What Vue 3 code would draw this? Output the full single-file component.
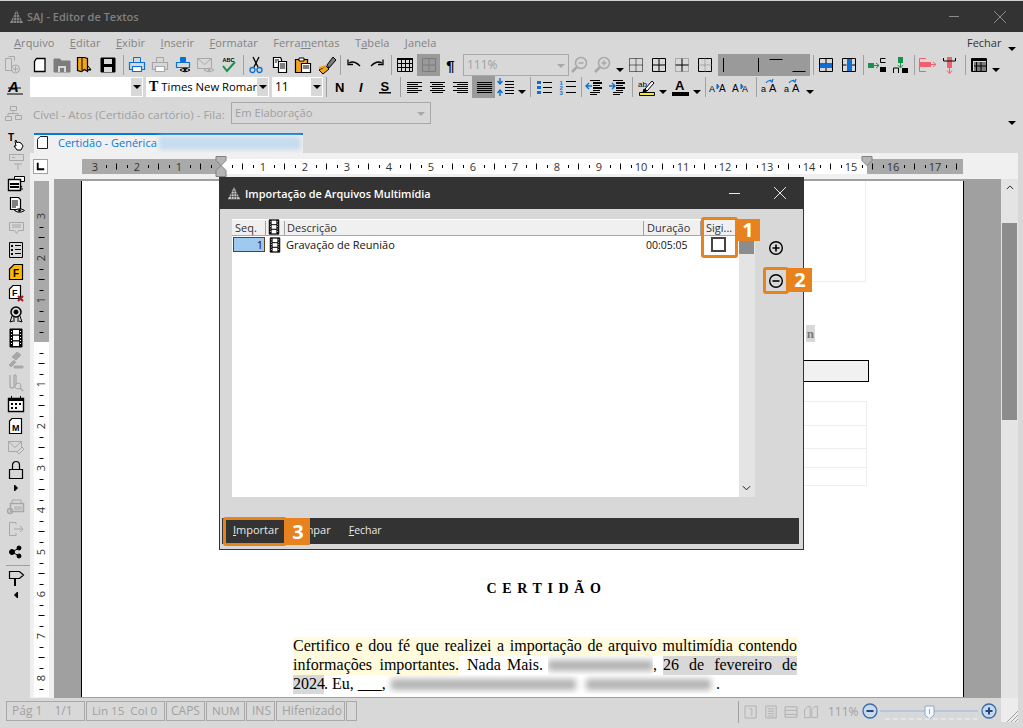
<script setup>
const K = '#000', G = '#a8a8a8', B = '#0a6fd6', O = '#f5a31a', R = '#f2606e', V = '#16924a', M = '#7c7c7c'
const p = (d, s = K, f = 'none', w = 1) => `<path d="${d}" stroke="${s}" fill="${f}" stroke-width="${w}"/>`
const c = (x, y, r, s = K, f = 'none', w = 1) => `<circle cx="${x}" cy="${y}" r="${r}" stroke="${s}" fill="${f}" stroke-width="${w}"/>`
const t = (x, y, s, size = 6, f = K, extra = '') => `<text x="${x}" y="${y}" font-size="${size}" fill="${f}" font-family="Liberation Sans, sans-serif" ${extra}>${s}</text>`
const eye = (x, y, s = K) => p(`M${x - 5} ${y}q5 -3.5 10 0q-5 3.5 -10 0z`, s, '#d8d8d8') + c(x, y, 1, s, s)
const printer = (s, f = 'none') => p('M6.5 2.5h7v5h-7z', s, f) + p('M2.5 7.5h15v7h-15z', s, f, 1.2) + p('M5.5 11.5h9v5h-9z', s, '#fff', 1.2)
const grid = (s, d = '') => `<g stroke-dasharray="${d}">` + p('M3.5 3.5h13v13h-13z', s) + p('M10 3.5v13M3.5 10h13', s) + '</g>'
const magnifier = plus => c(12, 8, 5.5, G, 'none', 1.5) + p('M8 12l-5 5', G, 'none', 2.5) + p('M9.5 8h5' + (plus ? 'M12 5.5v5' : ''), G, 'none', 1.5)
const lines = rows => rows.map(([x, y, w, h = 1, col = K]) => `<rect x="${x}" y="${y}" width="${w}" height="${h}" fill="${col}"/>`).join('')
const film = p('M4 1h12v18H4z', K, K) + lines([[7, 2, 6, 4.5, '#fff'], [7, 7.7, 6, 4.5, '#fff'], [7, 13.5, 6, 4.5, '#fff'], [5, 3, 1, 1, '#fff'], [5, 6, 1, 1, '#fff'], [5, 9, 1, 1, '#fff'], [5, 12, 1, 1, '#fff'], [5, 15, 1, 1, '#fff'], [14, 3, 1, 1, '#fff'], [14, 6, 1, 1, '#fff'], [14, 9, 1, 1, '#fff'], [14, 12, 1, 1, '#fff'], [14, 15, 1, 1, '#fff']])
const caseIcon = (s1, s2) => t(s1, 15, 'a', 9) + t(s2, 15, 'A', 11) + p('M6 6q3 -4 6 -1M10 3l2 2l1 -3', B, 'none', 1.2)

const icons = {
  newD: p('M3.5 3.5h6v12h-6z', G) + p('M6.5 1.5h6v4', G) + c(13.5, 14, 4, G) + p('M11 14h5M13.5 11.5v5', G),
  doc: p('M6.5 3.5h8.5v13H4.5V6.5z', K, '#fff', 1.3),
  openD: p('M2 4h6l1 2h9v11H2z', M, M) + lines([[6, 11, 8, 6, '#d8d8d8'], [8, 13, 4, 4, M]]),
  map: p('M2.5 2.5h7l3 1v13l-3 -2-3 2-4 -1z', K, O, 1.2) + p('M7 3v12', K) + p('M13 11l3 4h-3l3 -1', K),
  save: p('M3 3h14v14H3z', K, K) + lines([[6, 4, 8, 5, '#d8d8d8'], [6, 12, 8, 5, '#d8d8d8']]),
  printB: printer(B), printG: printer(G),
  printEye: p('M7.5 2.5h5v4h-5z', B, B) + p('M3.5 7.5h13v5h-13z', B, 'none', 1.2) + eye(12, 15),
  mailEye: p('M1.5 3.5h14v10h-14zM1.5 3.5l7 6l7 -6', G) + eye(13, 15, G),
  abc: t(3.5, 7, 'ABC', 5.5, K, 'font-weight="bold"') + p('M4 11l4 5l8 -9', V, 'none', 2),
  cut: p('M7 2l5 10M13 2L8 12', K, 'none', 1.3) + c(6.5, 15, 2.5, B, 'none', 1.3) + c(13.5, 15, 2.5, B, 'none', 1.3),
  copy: p('M3.5 2.5h7l1 2v8h-8z', K, '#fff', 1.2) + p('M8.5 6.5h8v11h-8z', K, '#fff', 1.2) + p('M10 9h5M10 11h5M10 13h5M5 5h4M5 7h2', K),
  paste: p('M2.5 4.5h12v13h-12z', K, O, 1.2) + p('M6 3h5v3H6z', K, '#fff') + p('M8.5 8.5h9v9h-9z', K, '#fff', 1.2) + p('M10 11h6M10 13h6', K),
  brush: p('M2 15l7 -4l3 3l-6 5z', K, O) + p('M10 10l6 -8l3 3l-7 8z', K, M) + p('M2 13l7 -2', O, 'none', 2),
  undo: p('M5 8q5 -3 11 3', K, 'none', 1.3) + p('M4 4.5v5h5', K, 'none', 1.3),
  redo: p('M15 8q-5 -3 -11 3', K, 'none', 1.3) + p('M16 4.5v5h-5', K, 'none', 1.3),
  table: p('M2.5 3.5h15v13h-15z', K) + lines([[2, 3, 16, 2]]) + p('M2.5 8.5h15M2.5 12.5h15M6.5 3.5v13M10.5 3.5v13M14.5 3.5v13', K),
  gridA: p('M3.5 3.5h13v13h-13zM10 3.5v13M3.5 10h13', M, 'none', 1),
  zm: magnifier(false), zp: magnifier(true),
  g1: grid(K, '1 1'), g2: grid(K),
  g3: `<g stroke-dasharray="1 1">${p('M3.5 3.5h13v13h-13z', M)}</g>` + p('M10 3.5v13M3.5 10h13', K),
  g4: p('M3.5 3.5h13v13h-13z', K) + `<g stroke-dasharray="1 1">${p('M10 3.5v13M3.5 10h13', M)}</g>`,
  bL: p('M3.5 3v14', K), bR: p('M15.5 3v14', K), bT: p('M3.5 4.5h13', K), bB: p('M3.5 16.5h13', K),
  rowB: lines([[4, 8, 12, 5, B]]) + p('M3.5 3.5h13v13h-13zM10 3.5v5M10 13v3', K),
  colB: lines([[8, 4, 5, 12, B]]) + p('M3.5 3.5h13v13h-13zM3.5 10h4M13 10h3', K),
  insR: lines([[1, 8, 6, 5, V]]) + p('M7 10.5h5M9 8l3 2.5l-3 2.5', V) + p('M13.5 3.5h5M13.5 3.5v4h5', K) + lines([[13, 12, 6, 5]]),
  insC: lines([[8, 2, 5, 6, V]]) + p('M10.5 8v4M8 10l2.5 3l2.5 -3', V) + p('M3.5 18v-5h5v5', K) + lines([[12, 13, 6, 5]]),
  delR: lines([[3, 7, 11, 5, R]]) + p('M9 3.5H2.5v13H9', R) + p('M14 9.5h5M16 7l3 2.5l-3 2.5', R),
  delC: lines([[7, 2, 5, 11, R]]) + p('M3.5 3v3h12V3', K) + p('M9.5 13v5M7 15.5l2.5 3l2.5 -3', R),
  shade: p('M2.5 3.5h15v13h-15z', K) + lines([[3, 4, 14, 2], [3, 6, 1, 10]]) + `<path d="M5 7h12v9H5z" fill="${M}"/>` + p('M7.5 7v9M12 7v9M5 11h12', K),
  styleA: t(3, 15, 'A', 15, K, 'font-style="italic" font-weight="bold"') + p('M2 17h16M3 11h13', K),
  N: t(5, 15, 'N', 13, K, 'font-weight="bold"'),
  I: t(7, 15, 'I', 13, K, 'font-weight="bold" font-style="italic"'),
  S: t(5.5, 14, 'S', 13, K, 'font-weight="bold"') + lines([[4, 15, 12, 1.5]]),
  al: lines([[3, 5, 15], [3, 7, 11], [3, 9, 15], [3, 11, 11], [3, 13, 15], [3, 15, 11]]),
  ac: lines([[3, 5, 15], [5, 7, 11], [3, 9, 15], [5, 11, 11], [3, 13, 15], [5, 15, 11]]),
  ar: lines([[3, 5, 15], [7, 7, 11], [3, 9, 15], [7, 11, 11], [3, 13, 15], [7, 15, 11]]),
  aj: lines([[3, 5, 15], [3, 7, 15], [3, 9, 15], [3, 11, 15], [3, 13, 15], [3, 15, 15]]),
  spacing: p('M4 1v6M1.5 4L4 7l2.5 -3M4 19v-6M1.5 16L4 13l2.5 3', B, 'none', 1.4) + lines([[9, 4, 9], [9, 7, 9], [9, 10, 9], [9, 13, 9], [9, 16, 9]]),
  bl: lines([[3, 4, 4, 3, B], [3, 9, 4, 3, B], [3, 14, 4, 3, B], [9, 5, 9], [9, 10, 9], [9, 15, 9]]),
  nl: t(2.5, 8, '1', 6, B, 'font-weight="bold"') + t(2.5, 13, '2', 6, B, 'font-weight="bold"') + t(2.5, 18, '3', 6, B, 'font-weight="bold"') + lines([[9, 4, 10], [9, 9, 10], [9, 15, 10]]),
  indL: p('M8 9H2M5 6L2 9l3 3', B, 'none', 1.4) + lines([[6, 3, 10], [9, 5, 9, 2], [9, 8, 7], [9, 10, 9, 2], [9, 13, 7], [6, 15, 10], [6, 17, 7]]),
  indR: p('M2 9h6M5 6l3 3l-3 3', B, 'none', 1.4) + lines([[6, 3, 10], [9, 5, 9, 2], [9, 8, 7], [9, 10, 9, 2], [9, 13, 7], [6, 15, 10], [6, 17, 7]]),
  hl: t(1, 10, 'ab', 8, K) + p('M8 12l7 -8l2 2l-7 8z', K, '#fff') + p('M7 12l3 2l-4 1z', K, K) + p('M2.5 15.5h15v3h-15z', K, '#f5ec16'),
  colA: t(5, 13, 'A', 13, K, 'font-weight="bold"') + lines([[2, 15, 17, 4]]),
  sup: t(1, 15, 'A', 9) + p('M9 7l2 2.5L9 12z', B, B) + t(11, 15, 'A', 10),
  sub: t(1, 15, 'A', 10) + p('M10 7l2 2.5L10 12z', B, B) + t(11, 15, 'A', 9),
  c1: caseIcon(1, 9), c2: caseIcon(1, 9),
  textHand: t(2, 9, 'T', 10, K, 'font-weight="bold"') + p('M9 9l1 -1l1 3l1 -1l3 1l2 3l-2 4h-4l-3 -4l2 0z', K, '#fff'),
  rulerT: p('M3.5 2.5h14v6h-14z', G) + lines([[6, 5, 3, 1, G]]) + p('M8 12h8M12 12v6', G),
  cards: p('M8.5 2.5h10v5h-10z', K, '#fff') + p('M2.5 5.5h12v11h-12z', K, '#fff', 1.4) + lines([[4, 9, 9, 2], [4, 12, 9, 2]]) + p('M16 12l-2 3h3', K),
  docEye: p('M4.5 2.5h8l2 2v10h-10z', K, '#fff', 1.2) + p('M6 6h6M6 8h6M6 10h6M6 12h4', K) + eye(13.5, 15.5),
  commentG: p('M3.5 4.5h14v8h-5l-2 3l-2 -3h-5z', G) + p('M6 7h9M6 9h9', G),
  list: p('M3.5 2.5h13v15h-13z', K) + lines([[5, 5, 2, 2], [9, 5, 6], [5, 9, 2, 2], [9, 9, 6], [5, 13, 2, 2], [9, 13, 6]]),
  fileF: p('M8 2.5h8.5v15h-13V7z', K, '#fdb900', 1.2) + t(7, 15, 'F', 10, K, 'font-weight="bold"'),
  fileX: p('M7 2.5h7.5v13h-11V6z', K, '#fff', 1.2) + t(6, 13, 'F', 9, K, 'font-weight="bold"') + p('M12 13l5 5M17 13l-5 5', '#b3121c', 'none', 2),
  ribbon: c(10, 7, 5, K, 'none', 1.5) + c(10, 7, 2, K, K) + p('M6 11l-2 6l3 -1M14 11l2 6l-3 -1M8 12v5M12 12v5', K),
  film,
  gavelG: p('M6 7l5 -5l4 3l-5 5z', G, G) + p('M8 10l-5 5l2 2l5 -5', G, G) + p('M8 16h9v2H8z', G, G),
  clipG: p('M4 3v11a2 2 0 0 0 4 0V4a1 1 0 0 1 2 0v9', G, 'none', 1.3) + c(12, 14, 3, G) + p('M14 16l3 3', G, 'none', 1.5),
  cal: p('M2.5 4.5h15v13h-15z', K, '#fff', 1.4) + lines([[2, 4, 16, 3], [5, 2, 1, 3], [14, 2, 1, 3], [5, 9, 2, 2], [9, 9, 2, 2], [13, 9, 2, 2], [5, 13, 2, 2], [9, 13, 2, 2]]),
  docM: p('M6 2.5h9.5v15h-12V5z', K, '#fff', 1.2) + t(6, 15, 'M', 9, K, 'font-weight="bold"'),
  mailG: p('M2.5 3.5h13v10h-13zM2.5 3.5l6.5 6l6.5 -6', G) + p('M11 14l5 -5l2 2l-5 5z', G, '#d8d8d8'),
  lock: p('M3.5 9.5h13v9h-13z', K, 'none', 1.2) + p('M6.5 9.5V5a3.5 3.5 0 0 1 7 0v4.5', K, 'none', 1.2),
  arrR: p('M8.5 7l3 3l-3 3z', K, K),
  arrL: p('M11.5 7l-3 3l3 3z', K, K),
  printKey: p('M6 3h9v6H6z', G) + p('M4.5 6.5h13v8h-13z', G, '#d8d8d8', 1.5) + c(4, 14, 2.5, G, 'none', 1.5) + p('M8 10h8M8 12h8', G),
  exit: p('M10 5.5V3.5H3.5v13H10V14', G) + p('M8 10h9M14 7l3 3l-3 3', G),
  share: c(6, 10, 2.5, K, K) + c(13, 6, 2, K, K) + c(13, 14, 2, K, K) + p('M6 10L13 6M6 10l7 4', K),
  sign: p('M3.5 3.5h10l4 3.5l-4 3.5h-10z', K, 'none', 1.2) + lines([[8, 11, 2, 7]]),
  logo: ''
}

const cellStyle = (list, horizontal = true) => {
  let right = 0
  return list.map(it => {
    const w = it.w ?? 23
    const left = it.c - w / 2
    const gap = left - right
    right = it.c + w / 2
    return { ...it, style: horizontal ? { marginLeft: gap + 'px', width: w + 'px' } : { marginTop: gap + 'px', height: w + 'px' } }
  })
}
const sep = x => ({ c: x, w: 1, k: 'sep' })
const dd = x => ({ c: x, w: 9, k: 'dd' })
const row1 = cellStyle([
  { c: 12, n: 'newD' }, { c: 40, n: 'doc' }, { c: 62, n: 'openD' }, { c: 85, n: 'map' }, { c: 108, n: 'save' }, sep(123),
  { c: 137, n: 'printB' }, { c: 160, n: 'printG' }, { c: 183, n: 'printEye' }, { c: 206, n: 'mailEye' }, { c: 229, n: 'abc' }, sep(243),
  { c: 256, n: 'cut' }, { c: 280, n: 'copy' }, { c: 303, n: 'paste' }, { c: 327, n: 'brush' }, sep(340),
  { c: 354, n: 'undo' }, { c: 377, n: 'redo' }, sep(391), { c: 405, n: 'table' }, { c: 428.5, n: 'gridA', on: true },
  { c: 450.5, k: 'pil' }, { c: 516, w: 106, k: 'zoom' }, { c: 579, n: 'zm' }, { c: 602, n: 'zp' }, dd(620),
  { c: 636, n: 'g1' }, { c: 659, n: 'g2' }, { c: 682, n: 'g3' }, { c: 705, n: 'g4' },
  { c: 729.5, n: 'bL', on: true }, { c: 752.5, n: 'bR', on: true }, { c: 775.5, n: 'bT', on: true }, { c: 798.5, n: 'bB', on: true },
  sep(813), { c: 826, n: 'rowB' }, { c: 849, n: 'colB' }, sep(863), { c: 877, n: 'insR' }, { c: 900, n: 'insC' }, sep(914),
  { c: 927, n: 'delR' }, { c: 950, n: 'delC' }, sep(965), { c: 979, n: 'shade' }, dd(996)
])
const row2 = cellStyle([
  { c: 15, n: 'styleA' }, { c: 86.5, w: 113, k: 'c1' }, { c: 207.5, w: 123, k: 'c2' }, { c: 297.5, w: 51, k: 'c3' }, sep(326),
  { c: 340, n: 'N' }, { c: 362, n: 'I' }, { c: 385, n: 'S' }, sep(400),
  { c: 414, n: 'al' }, { c: 437, n: 'ac' }, { c: 460, n: 'ar' }, { c: 483.5, n: 'aj', on: true }, { c: 506, n: 'spacing' }, dd(522), sep(530),
  { c: 544, n: 'bl' }, { c: 567, n: 'nl' }, sep(581), { c: 594, n: 'indL' }, { c: 617, n: 'indR' }, sep(632),
  { c: 647, n: 'hl' }, dd(663), { c: 680, n: 'colA' }, dd(697), sep(705),
  { c: 718, n: 'sup' }, { c: 741, n: 'sub' }, sep(756), { c: 770, n: 'c1' }, { c: 793, n: 'c2' }, dd(810)
])
const side = cellStyle([
  { c: 12, n: 'textHand' }, { c: 32, n: 'rulerT' }, { c: 54, n: 'cards' }, { c: 75, n: 'docEye' }, { c: 98, n: 'commentG' },
  { c: 120, n: 'list' }, { c: 142, n: 'fileF' }, { c: 163, n: 'fileX' }, { c: 185, n: 'ribbon' }, { c: 208, n: 'film' },
  { c: 230, n: 'gavelG' }, { c: 252, n: 'clipG' }, { c: 274, n: 'cal' }, { c: 296, n: 'docM' }, { c: 318, n: 'mailG' },
  { c: 340, n: 'lock' }, { c: 358, n: 'arrR', w: 12 }, { c: 377, n: 'printKey' }, { c: 399, n: 'exit' }, { c: 422, n: 'share' },
  { c: 435, w: 1, k: 'sep' }, { c: 448, n: 'sign' }, { c: 465, n: 'arrL', w: 12 }
].map(i => ({ ...i, w: i.w ?? 22 })), false)

const menus = [['A', 'rquivo'], ['E', 'ditar'], ['E', 'xibir'], ['I', 'nserir'], ['F', 'ormatar'], ['Ferra', 'm', 'entas'], ['T', 'a', 'bela'], ['J', 'anela']]
const menuItems = menus.map(m => m.length === 3
  ? { pre: m[0], u: m[1], post: m[2] }
  : { pre: '', u: m[0], post: m[1] })

const hNums = []
const hTicks = []
for (let k = -3; k <= 17; k++) {
  const x = 139 + k * 42
  if (k !== 0) hNums.push({ x, v: Math.abs(k) })
  for (const j of [1, 2, 3]) {
    const tx = x + j * 10.5
    if (tx > 0 && tx < 878) hTicks.push({ x: Math.round(tx) + 0.5, h: j === 2 ? 6 : 3 })
  }
}
const vNums = []
const vTicks = []
for (let k = -3; k <= 8; k++) {
  const y = 161 + k * 42
  if (k !== 0) vNums.push({ y, v: Math.abs(k) })
  for (const j of [1, 2, 3]) {
    const ty = y + j * 10.5
    if (ty > 0 && ty < 516) vTicks.push({ y: Math.round(ty) + 0.5, w: j === 2 ? 6 : 4 })
  }
}
const statusIcons = [
  p('M2.5 2.5h14v15h-14z', G) + p('M8 6h3v9', G),
  p('M3.5 2.5h13v15h-13z', G) + p('M6 6h8M6 9h8M6 12h8M6 15h8', G),
  p('M2.5 3.5h15v13h-15zM2.5 8h15M2.5 13h15', G),
  p('M2 17V7l4 -4h3v14zM11 17V7l4 -4h3v14z', G)
]
</script>

<template>
  <div class="win">
    <header class="titlebar">
      <svg class="logo" viewBox="0 0 16 16"><path d="M8 1L15 15H1z" fill="#8a8a8a" /><path d="M1 12h14M2 9h12M4 6h8M8 1v14M5 7v8M11 7v8" stroke="#333" stroke-width=".7" /></svg>
      <span class="title-text">SAJ - Editor de Textos</span>
      <span class="tb-min"></span>
      <svg class="tb-x" viewBox="0 0 12 12"><path d="M0 0l12 12M12 0L0 12" stroke="#8c8c8c" stroke-width="1" /></svg>
    </header>

    <nav class="menubar">
      <span v-for="m in menuItems" :key="m.pre + m.u + m.post" class="menu">{{ m.pre }}<u>{{ m.u }}</u>{{ m.post }}</span>
      <span class="fechar">Fechar</span><i class="tri fechar-tri"></i>
    </nav>

    <div class="toolrow">
      <template v-for="(it, i) in row1" :key="i">
        <span v-if="it.k === 'sep'" class="sep" :style="it.style"></span>
        <span v-else-if="it.k === 'dd'" class="ddcell" :style="it.style"><i class="tri"></i></span>
        <span v-else-if="it.k === 'pil'" class="btn pil" :style="it.style">¶</span>
        <span v-else-if="it.k === 'zoom'" class="zoomcombo" :style="it.style">111%<i class="tri tri-g"></i></span>
        <span v-else class="btn" :class="{ on: it.on }" :style="it.style"><svg viewBox="0 0 20 20" class="ico" v-html="icons[it.n]"></svg></span>
      </template>
    </div>
    <div class="toolrow">
      <template v-for="(it, i) in row2" :key="i">
        <span v-if="it.k === 'sep'" class="sep" :style="it.style"></span>
        <span v-else-if="it.k === 'dd'" class="ddcell" :style="it.style"><i class="tri"></i></span>
        <span v-else-if="it.k === 'c1'" class="combo" :style="it.style"><span class="combo-val"></span><span class="combo-btn"><i class="tri"></i></span></span>
        <span v-else-if="it.k === 'c2'" class="combo" :style="it.style"><span class="combo-val font-val"><b class="tt">T</b>Times New Romar</span><span class="combo-btn"><i class="tri"></i></span></span>
        <span v-else-if="it.k === 'c3'" class="combo" :style="it.style"><span class="combo-val">11</span><span class="combo-btn"><i class="tri"></i></span></span>
        <span v-else class="btn" :class="{ on: it.on }" :style="it.style"><svg viewBox="0 0 20 20" class="ico" v-html="icons[it.n]"></svg></span>
      </template>
    </div>

    <div class="row3">
      <svg class="orgicon" viewBox="0 0 20 20"><path d="M7.5 2.5h6v4h-6zM2.5 12.5h6v4h-6zM12.5 11.5h6v4h-6zM10 6.5v3M5 12.5v-3h10v2" stroke="#a8a8a8" fill="none" /></svg>
      <span class="crumb">Cível - Atos (Certidão cartório) - Fila:</span>
      <span class="filabox">Em Elaboração<i class="tri tri-g"></i></span>
      <i class="tri row3-tri"></i>
    </div>

    <div class="work">
      <aside class="sidebar">
        <template v-for="(it, i) in side" :key="i">
          <span v-if="it.k === 'sep'" class="side-sep" :style="it.style"></span>
          <span v-else class="side-btn" :style="it.style"><svg viewBox="0 0 20 20" class="ico" v-html="icons[it.n]"></svg></span>
        </template>
      </aside>

      <section class="center">
        <div class="tabs">
          <div class="tab">
            <svg class="tab-doc" viewBox="0 0 12 14"><path d="M3.5 .5h8v13H.5V3.5z" fill="#fff" stroke="#000" /></svg>
            <span class="tab-text">Certidão - Genérica</span>
            <span class="tab-blur"></span>
          </div>
        </div>

        <div class="rulerrow">
          <span class="corner"><svg viewBox="0 0 14 14"><path d="M4 3v7h7" stroke="#000" stroke-width="2" fill="none" /></svg></span>
          <svg class="hruler" width="890" height="26" viewBox="0 0 890 26">
            <rect x="0" y="6" width="881" height="15" fill="#fff" />
            <rect x="0" y="6" width="139" height="15" fill="#a9a9a9" />
            <rect x="785" y="6" width="96" height="15" fill="#a9a9a9" />
            <line v-for="tk in hTicks" :key="tk.x" :x1="tk.x" :x2="tk.x" :y1="13.5 - tk.h / 2" :y2="13.5 + tk.h / 2" stroke="#000" />
            <text v-for="n in hNums" :key="n.x" :x="n.x" y="17.5" class="rnum">{{ n.v }}</text>
            <path d="M134 3.5h10v4l-5 5l-5 -5zM134 23.5h10v-6l-5 -5l-5 5z" fill="#b5b5b5" stroke="#808080" />
            <path d="M780 3.5h10v4l-5 5l-5 -5z" fill="#b5b5b5" stroke="#808080" />
          </svg>
        </div>

        <div class="docarea">
          <div class="vruler-wrap">
            <svg class="vruler" width="15" height="516" viewBox="0 0 15 516">
              <rect width="15" height="516" fill="#fff" />
              <rect width="15" height="161" fill="#a9a9a9" />
              <line v-for="tk in vTicks" :key="tk.y" :y1="tk.y" :y2="tk.y" :x1="7.5 - tk.w / 2" :x2="7.5 + tk.w / 2" stroke="#000" />
              <text v-for="n in vNums" :key="n.y" class="rnum" :transform="`translate(11 ${n.y}) rotate(-90)`">{{ n.v }}</text>
            </svg>
          </div>
          <div class="board">
            <article class="page">
              <div class="faintbox"></div>
              <div class="hidden-head"><span>n</span></div>
              <div class="blackbox"></div>
              <div class="faint-table"><div class="r1"></div><div class="r2"></div><div class="r3"></div><div class="r4"></div></div>
              <h1 class="doc-title">CERTIDÃO</h1>
              <div class="para">
                <p class="line yellow just">Certifico e dou fé que realizei a importação de arquivo multimídia contendo</p>
                <p class="line flexl">
                  <span class="s-a just">informações importantes.</span>
                  <span class="s-b just">Nada Mais.</span>
                  <span class="s-blur"><i></i></span>
                  <span class="s-c">,</span>
                  <span class="s-d just">26 de fevereiro de</span>
                </p>
                <p class="line flexl">
                  <span class="s-e">2024</span>
                  <span class="s-f">. Eu, ___,</span>
                  <span class="s-blur2"><i class="b1"></i><i class="b2"></i></span>
                  <span>.</span>
                </p>
              </div>
            </article>
          </div>
          <div class="vscroll">
            <svg class="sc-up" viewBox="0 0 10 6"><path d="M1 5l4 -4l4 4" stroke="#000" fill="none" /></svg>
            <div class="sc-thumb"></div>
          </div>
        </div>
      </section>
    </div>

    <footer class="status">
      <span class="st st1"><span>Pág 1</span><span>1/1</span></span>
      <span class="st st2"><span>Lin 15</span><span>Col 0</span></span>
      <span class="st st3">CAPS</span>
      <span class="st st4">NUM</span>
      <span class="st st5">INS</span>
      <span class="st st6">Hifenizado</span>
      <span class="st st7"></span>
      <span class="st-sep"></span>
      <svg v-for="(s, i) in statusIcons" :key="i" class="st-ico" viewBox="0 0 20 20" v-html="s"></svg>
      <span class="st-zoom">111%</span>
      <svg class="slider" width="135" height="22" viewBox="0 0 135 22">
        <circle cx="8" cy="11" r="7" fill="#c6d9f0" stroke="#3d6aa5" stroke-width="1.3" />
        <path d="M4.5 11h7" stroke="#24477a" stroke-width="2" />
        <path d="M18 11h98" stroke="#a9c1de" stroke-width="1.5" />
        <path d="M63 6h9v9l-4.5 4l-4.5 -4z" fill="#f4f7fb" stroke="#8fa9c9" />
        <path d="M67.5 9v5" stroke="#8fa9c9" />
        <path d="M23 19h92" stroke="#f4f4f4" stroke-dasharray="5 3" />
        <circle cx="127" cy="11" r="7" fill="#c6d9f0" stroke="#3d6aa5" stroke-width="1.3" />
        <path d="M123.5 11h7M127 7.5v7" stroke="#24477a" stroke-width="2" />
      </svg>
      <span class="grip"><svg viewBox="0 0 12 12"><path d="M1 12L12 1M5 12l7 -7M9 12l3 -3" stroke="#a0a0a0" /></svg></span>
    </footer>

    <div class="dialog">
      <div class="dlg-title">
        <svg class="dlg-logo" viewBox="0 0 16 16"><path d="M8 1L15 15H1z" fill="#c8c8c8" /><path d="M1 12h14M2 9h12M4 6h8M8 1v14M5 7v8M11 7v8" stroke="#333" stroke-width=".7" /></svg>
        <span class="dlg-name">Importação de Arquivos Multimídia</span>
        <span class="dlg-min"></span>
        <svg class="dlg-x" viewBox="0 0 12 12"><path d="M0 0l12 12M12 0L0 12" stroke="#e6e6e6" stroke-width="1" /></svg>
      </div>
      <div class="dlg-body">
        <div class="listbox">
          <div class="tablewrap">
            <div class="tgrid thead">
              <span class="th">Seq.</span>
              <span class="th th-ico"><svg viewBox="0 0 20 20" class="film-h" v-html="icons.film"></svg></span>
              <span class="th">Descrição</span>
              <span class="th th-dur">Duração</span>
              <span class="th th-sig">Sigi...</span>
            </div>
            <div class="tgrid trow">
              <span class="td-seq">1</span>
              <span class="td-film"><svg viewBox="0 0 20 20" class="film-h" v-html="icons.film"></svg></span>
              <span class="td-desc">Gravação de Reunião</span>
              <span class="td-dur">00:05:05</span>
              <span class="td-chk"><i class="checkbox"></i></span>
            </div>
          </div>
          <div class="list-scroll">
            <div class="ls-thumb"></div>
            <svg class="ls-down" viewBox="0 0 10 6"><path d="M1 1l4 4l4 -4" stroke="#000" fill="none" /></svg>
          </div>
        </div>
        <div class="dlg-side">
          <svg class="round" viewBox="0 0 16 16"><circle cx="8" cy="8" r="6.3" fill="none" stroke="#000" stroke-width="1.4" /><path d="M4.5 8h7M8 4.5v7" stroke="#000" stroke-width="1.6" /></svg>
          <svg class="round" viewBox="0 0 16 16"><circle cx="8" cy="8" r="6.3" fill="none" stroke="#000" stroke-width="1.4" /><path d="M4.5 8h7" stroke="#000" stroke-width="1.6" /></svg>
        </div>
      </div>
      <div class="dlg-foot">
        <span class="f-btn f1"><u>I</u>mportar</span>
        <span class="f-btn f2"><u>L</u>impar</span>
        <span class="f-btn f3"><u>F</u>echar</span>
      </div>

      <div class="frame fr1"></div><div class="badge b1">1</div>
      <div class="frame fr2"></div><div class="badge b2">2</div>
      <div class="frame fr3"></div><div class="badge b3">3</div>
    </div>
  </div>
</template>

<style>
html, body { margin: 0; padding: 0; }
</style>

<style scoped>
.win {
  position: relative; width: 1023px; height: 728px; overflow: hidden; background: #d8d8d8;
  display: flex; flex-direction: column; font-family: "Open Sans", "Liberation Sans", sans-serif; font-size: 11px; color: #000;
  border-top: 1px solid #d0d0d0; box-sizing: border-box;
}
.titlebar { height: 31px; flex: none; background: #333; display: flex; align-items: center; padding-left: 9px; }
.logo { width: 15px; height: 15px; }
.title-text { margin-left: 3px; color: #808080; font-weight: 600; font-size: 11px; }
.tb-min { width: 10px; height: 1px; background: #8c8c8c; margin-left: auto; }
.tb-x { width: 12px; height: 12px; margin: 0 17px 0 35px; }
.menubar { height: 22px; flex: none; display: flex; align-items: center; padding: 0 0 2px 14px; box-sizing: border-box; color: #838383; position: relative; }
.menu { margin-right: 15.3px; white-space: nowrap; letter-spacing: .1px; }
.fechar { position: absolute; left: 967px; top: 3px; color: #333; }
.fechar-tri { position: absolute; left: 1008px; top: 15px; }
.tri { display: inline-block; width: 0; height: 0; border: 4px solid transparent; border-top: 4px solid #000; border-bottom: 0; }
.tri-g { border-top-color: #a8a8a8; }
.toolrow { height: 22px; flex: none; display: flex; align-items: stretch; }
.btn { flex: none; display: flex; align-items: center; justify-content: center; height: 22px; }
.btn.on { background: #9a9a9a; }
.ico { width: 20px; height: 20px; display: block; overflow: visible; }
.sep { flex: none; background: #a0a0a0; height: 20px; margin-top: 1px; }
.ddcell { flex: none; display: flex; align-items: flex-end; justify-content: center; padding-bottom: 4px; box-sizing: border-box; }
.pil { font-family: "Liberation Sans", sans-serif; font-size: 15px; font-weight: 700; }
.zoomcombo { flex: none; box-sizing: border-box; border: 1px solid #a8a8a8; color: #a0a0a0; padding-left: 3px; font-size: 12px; line-height: 20px; position: relative; }
.zoomcombo .tri { position: absolute; right: 3px; top: 9px; }
.combo { flex: none; display: flex; height: 20px; margin-top: 1px; background: #fff; }
.combo-val { flex: 1; min-width: 0; white-space: nowrap; padding-left: 3px; line-height: 20px; font-size: 12px; }
.font-val { font-size: 11.3px; }
.tt { font-family: "Liberation Serif", serif; font-size: 14px; margin-right: 3px; }
.combo-btn { width: 11px; background: #d8d8d8; margin: 1px; display: flex; align-items: center; justify-content: center; }
.row3 { height: 32px; flex: none; display: flex; align-items: center; padding-left: 3px; position: relative; box-sizing: border-box; }
.orgicon { width: 20px; height: 20px; flex: none; }
.crumb { margin-left: 10px; color: #a0a0a0; white-space: nowrap; font-size: 11.6px; }
.filabox { position: absolute; left: 231px; top: 4px; width: 200px; height: 22px; box-sizing: border-box; border: 1px solid #a8a8a8; padding-left: 3px; line-height: 20px; color: #a0a0a0; font-size: 11.2px; }
.filabox .tri { position: absolute; right: 5px; top: 9px; }
.row3-tri { position: absolute; left: 1008px; top: 23px; }
.work { flex: 1; min-height: 0; display: flex; }
.sidebar { width: 30px; flex: none; display: flex; flex-direction: column; align-items: center; padding-left: 2px; box-sizing: border-box; }
.side-btn { flex: none; display: flex; align-items: center; justify-content: center; }
.side-sep { flex: none; align-self: flex-end; width: 24px; background: #a0a0a0; }
.center { flex: 1; display: flex; flex-direction: column; min-width: 0; }
.tabs { height: 23px; flex: none; padding: 3px 0 0 4px; box-sizing: border-box; }
.tab { width: 269px; height: 20px; box-sizing: border-box; background: #f0f0f0; border-top: 2px solid #0a78d7; display: flex; align-items: center; padding: 0 0 3px 3px; }
.tab-doc { width: 11px; height: 13px; }
.tab-text { color: #0a78d7; margin-left: 10px; white-space: nowrap; }
.tab-blur { width: 142px; height: 14px; margin-left: 2px; background: #c8dcee; filter: blur(2px); }
.rulerrow { height: 26px; flex: none; background: #f0f0f0; margin-right: 5px; display: flex; position: relative; }
.corner { width: 15px; height: 15px; margin: 6px 0 0 3px; box-sizing: border-box; border: 1px solid #a0a0a0; background: #fff; flex: none; }
.corner svg { display: block; width: 13px; height: 13px; }
.hruler { margin-left: 34px; flex: none; display: block; overflow: visible; }
.rnum { font-family: "Open Sans", sans-serif; font-size: 11px; fill: #333; text-anchor: middle; }
.docarea { flex: 1; min-height: 0; display: flex; margin-right: 5px; }
.vruler-wrap { width: 24px; flex: none; background: #f0f0f0; padding: 2px 0 0 4px; box-sizing: border-box; }
.vruler { display: block; }
.board { flex: 1; background: #a0a0a0; padding: 2px 37px 0 27px; min-width: 0; overflow: hidden; }
.page { height: 516px; background: #fff; border-left: 1px solid #000; border-right: 1px solid #000; box-sizing: border-box; padding-left: 139px; padding-right: 94px; overflow: hidden; font-family: "Liberation Serif", serif; }
.faintbox { height: 101px; margin-right: 3px; border-right: 1px solid #eee; border-bottom: 1px solid #eee; box-sizing: border-box; }
.hidden-head { margin-top: 43px; height: 17px; padding-right: 54px; text-align: right; font-weight: 700; font-size: 13px; line-height: 17px; color: #777; }
.hidden-head span { background: #d8d8d8; padding: 1px 1px; }
.blackbox { margin-top: 18px; height: 22px; box-sizing: border-box; background: #f1f1f1; border: 1px solid #000; }
.faint-table { margin-top: 19px; border: 1px solid #eee; width: 646px; box-sizing: border-box; }
.r1 { height: 23px; border-bottom: 1px solid #eee; }
.r2 { height: 22px; border-bottom: 1px solid #eee; }
.r3 { height: 18px; border-bottom: 1px solid #eee; }
.r4 { height: 17px; }
.doc-title { margin: 94px 0 0; padding-left: 3px; font-size: 14px; font-weight: 700; text-align: center; letter-spacing: 5.6px; line-height: 18px; font-family: "Liberation Serif", serif; }
.para { margin-top: 39px; margin-left: 72px; margin-right: 72px; font-size: 16px; }
.line { margin: 0; height: 19px; line-height: 18px; white-space: nowrap; }
.just { text-align: justify; text-align-last: justify; white-space: normal; }
.yellow { background: #fffbdc; }
.flexl { display: flex; }
.s-a { width: 166px; background: #fffbdc; flex: none; }
.s-b { width: 76px; margin-left: 8px; flex: none; }
.s-blur { width: 105px; margin-left: 5px; flex: none; height: 19px; overflow: hidden; }
.s-blur i, .s-blur2 i { display: block; background: #b2b2b2; filter: blur(3px); height: 11px; margin-top: 4px; }
.s-c { width: 10px; flex: none; }
.s-d { width: 134px; background: #d8d8d8; flex: none; }
.s-e { background: #d8d8d8; flex: none; width: 31px; }
.s-f { width: 62px; flex: none; white-space: pre; }
.s-blur2 { width: 330px; flex: none; height: 19px; overflow: hidden; display: flex; gap: 10px; }
.s-blur2 .b1 { width: 185px; margin-left: 5px; }
.s-blur2 .b2 { width: 125px; }
.vscroll { width: 17px; flex: none; background: #e4e4e4; position: relative; }
.sc-up { display: block; width: 8px; height: 5px; margin: 6px auto 0; }
.sc-thumb { position: absolute; left: 1px; right: 1px; top: 44px; height: 197px; background: #8c8c8c; }
.status { height: 30px; flex: none; display: flex; align-items: flex-start; padding: 2px 5px 0 6px; box-sizing: border-box; color: #a0a0a0; position: relative; }
.st { height: 20px; margin-top: 1px; box-sizing: border-box; border: 1px solid #a8a8a8; line-height: 18px; flex: none; white-space: nowrap; font-size: 12px; padding-left: 5px; margin-right: 1px; }
.st1 { width: 79px; display: flex; gap: 12px; }
.st2 { width: 79px; display: flex; gap: 6px; font-size: 11.6px; }
.st3 { width: 39px; padding-left: 4px; }
.st4 { width: 39px; padding-left: 5px; font-size: 11.6px; }
.st5 { width: 29px; }
.st6 { width: 69px; }
.st7 { width: 11px; }
.st-sep { width: 1px; height: 22px; background: #a0a0a0; margin-left: 380px; margin-top: 1px; flex: none; }
.st-ico { width: 16px; height: 16px; margin: 4px 0 0 0; flex: none; }
.st-ico:first-of-type { margin-left: 4px; }
.st-ico + .st-ico { margin-left: 4px; }
.st-zoom { margin-left: 9px; margin-top: 3px; font-size: 12px; flex: none; width: 34px; }
.slider { flex: none; display: block; }
.grip { margin-left: auto; width: 17px; height: 24px; background: #ececec; margin-top: -2px; display: flex; align-items: flex-end; justify-content: flex-end; flex: none; }
.grip svg { width: 12px; height: 12px; }

.dialog { position: absolute; left: 219px; top: 176px; width: 585px; height: 373px; box-sizing: border-box; background: #d8d8d8; border: 1px solid #333; border-top: 0; display: flex; flex-direction: column; }
.dlg-title { height: 32px; flex: none; background: #333; display: flex; align-items: center; padding-left: 8px; color: #fff; margin: 0 -1px; }
.dlg-logo { width: 14px; height: 14px; }
.dlg-name { margin-left: 4px; font-weight: 600; font-size: 10.9px; }
.dlg-min { width: 11px; height: 1px; background: #e6e6e6; margin-left: auto; }
.dlg-x { width: 12px; height: 12px; margin: 0 18px 0 34px; }
.dlg-body { flex: 1; display: flex; padding: 10px 0 21px 12px; min-height: 0; }
.listbox { width: 523px; display: flex; background: #fff; }
.tablewrap { flex: 1; min-width: 0; }
.tgrid { display: grid; grid-template-columns: 33px 19px 359px 57px 39px; }
.thead { background: #f0f0f0; border-top: 1px solid #fff; border-bottom: 1px solid #a8a8a8; height: 15px; }
.th { border-left: 1px solid #a0a0a0; margin: 1px 0; padding-left: 2px; line-height: 13px; color: #333; font-size: 11px; white-space: nowrap; }
.th:first-child { border-left: 0; padding-left: 3px; }
.th-ico { padding-left: 1px; }
.th-dur { padding-left: 3px; }
.th-sig { padding-left: 5px; }
.film-h { width: 16px; height: 16px; display: block; margin-top: -2px; margin-left: -1px; overflow: visible; }
.trow { height: 17px; align-items: center; color: #111; }
.td-seq { height: 15px; margin-left: 1px; box-sizing: border-box; background: #9fc9ee; border: 1px solid #6b3d14; text-align: right; padding-right: 1px; line-height: 13px; }
.td-film { display: flex; justify-content: center; }
.td-film .film-h { margin: 0; }
.td-desc { padding-left: 2px; white-space: nowrap; }
.td-dur { padding-left: 3px; font-size: 10.5px; }
.td-chk { display: flex; justify-content: center; padding-right: 2px; }
.checkbox { display: block; width: 15px; height: 15px; box-sizing: border-box; border: 2px solid #444; }
.list-scroll { width: 16px; flex: none; background: #e4e4e4; position: relative; }
.ls-thumb { position: absolute; left: 0; right: 1px; top: 22px; height: 13px; background: #8c8c8c; }
.ls-down { position: absolute; left: 3px; bottom: 6px; width: 9px; height: 6px; }
.dlg-side { width: 42px; flex: none; display: flex; flex-direction: column; align-items: center; padding-top: 21px; gap: 17px; }
.round { width: 16px; height: 16px; display: block; }
.dlg-foot { height: 26px; flex: none; background: #333; margin: 0 4px 5px 2px; display: flex; align-items: center; padding-bottom: 3px; box-sizing: border-box; color: #e8e8e8; position: relative; }
.f-btn { white-space: nowrap; }
.f1 { margin-left: 11px; }
.f2 { margin-left: 16px; }
.f3 { margin-left: 18px; font-size: 10.5px; }
.frame { position: absolute; box-sizing: border-box; border: 3px solid #e8821e; border-radius: 3px; }
.fr1 { left: 481px; top: 40px; width: 37px; height: 41px; }
.fr2 { left: 543px; top: 90px; width: 26px; height: 27px; }
.fr3 { left: 3px; top: 340px; width: 64px; height: 29px; }
.badge { position: absolute; width: 24px; background: #e8821e; color: #fff; font-family: "Open Sans", sans-serif; font-weight: 700; font-size: 20px; text-align: center; }
.b1 { left: 516px; top: 42px; height: 22px; line-height: 22px; }
.b2 { left: 568px; top: 91px; height: 24px; line-height: 24px; }
.b3 { left: 66px; top: 341px; height: 27px; line-height: 27px; }
</style>
